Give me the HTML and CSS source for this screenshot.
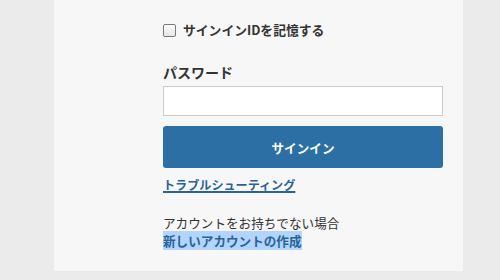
FILE: index.html
```html
<!DOCTYPE html>
<html lang="ja">
<head>
<meta charset="utf-8">
<link rel="stylesheet" href="styles.css">
</head>
<body>
<div class="card">
  <div class="form">
    <label class="remember">
      <span class="box"></span>
      <span class="remember-text">サインインIDを記憶する</span>
    </label>
    <div class="field-label">パスワード</div>
    <div class="input"></div>
    <div class="button">サインイン</div>
    <a class="trouble" href="#">トラブルシューティング</a>
    <p class="no-account">アカウントをお持ちでない場合</p>
    <a class="create" href="#"><span class="sel">新しいアカウントの作成</span></a>
  </div>
</div>
</body>
</html>
```

FILE: styles.css
```css
html, body {
  margin: 0;
  padding: 0;
  background: #ebebeb;
  font-family: "Noto Sans CJK JP", "Noto Sans", sans-serif;
  color: #333;
}
.card {
  margin-left: 54px;
  width: 409px;
  height: 271px;
  background: #f7f7f7;
  box-sizing: border-box;
  padding: 20px 0 0 109px;
}
.form {
  width: 280px;
  display: flex;
  flex-direction: column;
  align-items: flex-start;
}
.remember {
  display: flex;
  align-items: center;
  height: 20px;
  gap: 7px;
}
.box {
  width: 11px;
  height: 11px;
  border: 1px solid #7a7a7a;
  border-radius: 2px;
  background: linear-gradient(#fdfdfd, #e6e6e6);
}
.remember-text {
  font-size: 12.8px;
  font-weight: bold;
  line-height: 20px;
  color: #333;
}
.field-label {
  margin-top: 22px;
  font-size: 14px;
  font-weight: bold;
  line-height: 20px;
  color: #333;
}
.input {
  margin-top: 4px;
  width: 280px;
  height: 30px;
  box-sizing: border-box;
  border: 1px solid #cccccc;
  background: #fff;
}
.button {
  margin-top: 10px;
  width: 280px;
  height: 42px;
  border-radius: 3px;
  background: #2b6fa5;
  color: #fff;
  font-size: 12.6px;
  font-weight: bold;
  display: flex;
  align-items: center;
  justify-content: center;
}
.trouble {
  margin-top: 8px;
  font-size: 12.1px;
  font-weight: bold;
  line-height: 18px;
  color: #2a6496;
  text-decoration: underline;
  text-decoration-thickness: 1.5px;
}
.no-account {
  margin: 20px 0 0;
  font-size: 12.6px;
  line-height: 18px;
  color: #333;
}
.create {
  font-size: 12.6px;
  font-weight: bold;
  line-height: 18px;
  color: #2a6496;
  text-decoration: none;
}
.sel {
  background: #b3d4fc;
}
```
